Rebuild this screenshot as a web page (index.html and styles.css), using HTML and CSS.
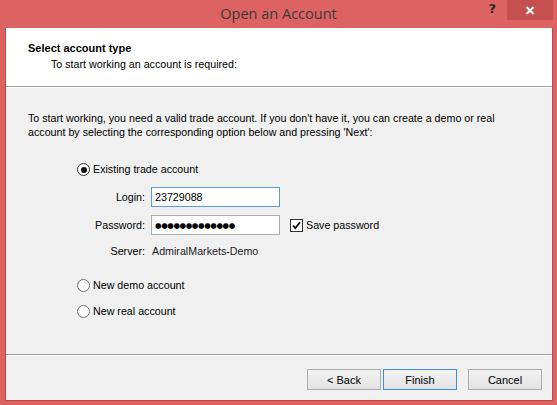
FILE: index.html
```html
<!DOCTYPE html>
<html>
<head>
<meta charset="utf-8">
<link rel="stylesheet" href="styles.css">
</head>
<body>
<div class="window">
  <div class="titlebar">
    <div class="title">Open an Account</div>
    <div class="controls">
      <span class="help">?</span>
      <span class="close">
        <svg width="10" height="9" viewBox="0 0 10 9"><path d="M1.5 1 L8.5 8 M8.5 1 L1.5 8" stroke="#fff" stroke-width="2" fill="none"/></svg>
      </span>
    </div>
  </div>
  <div class="client">
    <div class="header">
      <div class="h-title">Select account type</div>
      <div class="h-sub">To start working an account is required:</div>
    </div>
    <div class="sep"></div>
    <div class="main">
      <p class="intro">To start working, you need a valid trade account. If you don't have it, you can create a demo or real account by selecting the corresponding option below and pressing 'Next':</p>
      <div class="options">
        <div class="radio-row"><span class="radio checked"></span><span>Existing trade account</span></div>
        <div class="form">
          <span class="lbl">Login:</span>
          <div class="input focused">23729088</div>
          <span></span>
          <span class="lbl">Password:</span>
          <div class="input"><span class="dots">●●●●●●●●●●●●●</span></div>
          <div class="check-row"><span class="checkbox"><svg width="11" height="11" viewBox="0 0 11 11"><path d="M2 5.5 L4.3 8.2 L9 2.2" stroke="#000" stroke-width="1.8" fill="none"/></svg></span><span>Save password</span></div>
          <span class="lbl srv">Server:</span>
          <span class="srv-val">AdmiralMarkets-Demo</span>
          <span></span>
        </div>
        <div class="radio-row demo"><span class="radio"></span><span>New demo account</span></div>
        <div class="radio-row real"><span class="radio"></span><span>New real account</span></div>
      </div>
    </div>
    <div class="sep"></div>
    <div class="footer">
      <button class="btn">&lt; Back</button>
      <button class="btn default">Finish</button>
      <button class="btn cancel">Cancel</button>
    </div>
  </div>
</div>
</body>
</html>
```
FILE: styles.css
```css
html, body {
  margin: 0;
  padding: 0;
}
body {
  width: 557px;
  height: 405px;
  overflow: hidden;
  font-family: "Liberation Sans", Arial, sans-serif;
  font-size: 10.7px;
  color: #000;
}
.window {
  width: 557px;
  height: 405px;
  box-sizing: border-box;
  background: #dd6363;
  padding: 0 4px 4px 5px;
  display: flex;
  flex-direction: column;
}
.titlebar {
  height: 28px;
  position: relative;
  margin: 0 -4px 0 -5px;
}
.title {
  text-align: center;
  font-family: "Open Sans", "Noto Sans", sans-serif;
  font-size: 14.5px;
  line-height: 28px;
  color: #3a3a3a;
}
.controls {
  position: absolute;
  top: 0;
  right: 4px;
  display: flex;
  align-items: flex-start;
}
.help {
  font-family: "DejaVu Sans", sans-serif;
  font-weight: bold;
  font-size: 13px;
  color: #2b2b2b;
  line-height: 18px;
  margin-right: 11px;
}
.close {
  width: 46px;
  height: 20px;
  background: #c64f4f;
  display: flex;
  align-items: center;
  justify-content: center;
}
.client {
  flex: 1;
  border: 1px solid #b94848;
  border-top: none;
  background: #f0f0f0;
  display: flex;
  flex-direction: column;
}
.header {
  background: #fff;
  height: 58px;
  box-sizing: border-box;
  padding: 14px 22px 0 22px;
}
.h-title {
  font-weight: bold;
  font-size: 11px;
  line-height: 13px;
}
.h-sub {
  line-height: 13px;
  margin-top: 3px;
  padding-left: 23px;
}
.sep {
  height: 1px;
  background: #a0a0a0;
  border-bottom: 1px solid #fff;
}
.main {
  flex: 1;
}
.intro {
  margin: 0;
  padding: 23px 22px 0 22px;
  line-height: 14px;
}
.options {
  margin-left: 71px;
}
.radio-row {
  display: flex;
  align-items: center;
  height: 13px;
  line-height: 13px;
  margin-top: 24px;
}
.radio-row.demo {
  margin-top: 23px;
}
.radio-row.real {
  margin-top: 13px;
}
.radio {
  width: 11px;
  height: 11px;
  border: 1px solid #707070;
  border-radius: 50%;
  background: #fff;
  margin-right: 3px;
  display: flex;
  align-items: center;
  justify-content: center;
  flex: none;
}
.radio.checked {
  border-color: #333;
}
.radio.checked::after {
  content: "";
  width: 6px;
  height: 6px;
  border-radius: 50%;
  background: #111;
}
.form {
  display: grid;
  grid-template-columns: 68px 129px auto;
  column-gap: 6px;
  row-gap: 8px;
  align-items: center;
  margin-top: 11px;
  grid-template-rows: 20px 20px 13px;
}
.lbl {
  text-align: right;
}
.lbl.srv {
  margin-top: 3px;
}
.srv-val {
  margin-top: 3px;
  padding-left: 1px;
  color: #222;
}
.input {
  height: 20px;
  box-sizing: border-box;
  border: 1px solid #abadb3;
  background: #fff;
  padding-left: 3px;
  line-height: 18px;
  overflow: hidden;
}
.input.focused {
  border-color: #569de5;
}
.dots {
  font-family: "DejaVu Sans", sans-serif;
  font-size: 7.5px;
  letter-spacing: -0.4px;
  vertical-align: 1px;
}
.check-row {
  display: flex;
  align-items: center;
  margin-left: 4px;
}
.checkbox {
  width: 11px;
  height: 11px;
  border: 1px solid #333;
  background: #fff;
  margin-right: 3px;
  display: flex;
  align-items: center;
  justify-content: center;
}
.checkbox svg {
  display: block;
}
.footer {
  height: 44px;
  box-sizing: border-box;
  padding: 13px 10px 0 0;
  display: flex;
  justify-content: flex-end;
  align-items: flex-start;
}
.btn {
  width: 74px;
  height: 21px;
  box-sizing: border-box;
  border: 1px solid #adadad;
  background: linear-gradient(#f2f2f2, #e3e3e3);
  font-family: "Liberation Sans", Arial, sans-serif;
  font-size: 11px;
  color: #000;
  padding: 0;
  margin: 0 0 0 2px;
}
.btn.default {
  border-color: #3c8ee5;
}
.btn.cancel {
  margin-left: 11px;
}
```
